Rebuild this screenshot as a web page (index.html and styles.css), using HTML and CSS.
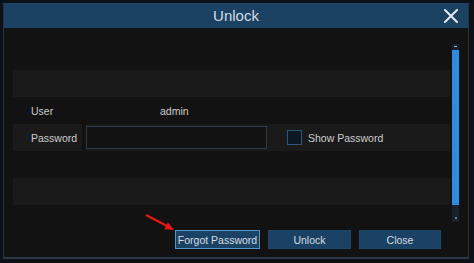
FILE: index.html
```html
<!DOCTYPE html>
<html>
<head>
<meta charset="utf-8">
<link rel="stylesheet" href="styles.css">
</head>
<body>
<div class="dialog">
  <div class="titlebar">
    <span></span>
    <span class="title">Unlock</span>
    <svg class="close" width="14" height="14" viewBox="0 0 14 14"><path d="M1 1 L13 13 M13 1 L1 13" stroke="#e3e8ec" stroke-width="2" stroke-linecap="square"/></svg>
  </div>
  <div class="content">
    <div class="main">
      <div class="row"></div>
      <div class="row light"></div>
      <div class="row">
        <span class="label wide">User</span>
        <span class="value">admin</span>
      </div>
      <div class="row light">
        <span class="label cell">Password</span>
        <span class="gap"></span>
        <span class="input"></span>
        <span class="check"></span>
        <span class="label">Show Password</span>
      </div>
      <div class="row"></div>
      <div class="row light"></div>
      <div class="footer">
        <button class="btn selected">Forgot Password</button>
        <button class="btn">Unlock</button>
        <button class="btn">Close</button>
      </div>
    </div>
    <div class="scroll">
      <div class="tick"></div>
      <div class="thumb"></div>
      <div class="dot"></div>
    </div>
  </div>
  <svg class="arrow" width="40" height="26" viewBox="0 0 40 26"><line x1="6" y1="5" x2="27" y2="16" stroke="#e01818" stroke-width="2.5"/><polygon points="34,20 24.2,19.3 28,12.3" fill="#e01818"/></svg>
</div>
</body>
</html>
```

FILE: styles.css
```css
html, body {
  margin: 0;
  padding: 0;
  background: #0c1117;
}
body {
  padding: 3px 0 0 3px;
  font-family: "Liberation Sans", Arial, sans-serif;
}
.dialog {
  position: relative;
  width: 466px;
  height: 256px;
  box-sizing: border-box;
  background: #121212;
  border-left: 1px solid #25313b;
  border-right: 1px solid #25313b;
  border-bottom: 2px solid #2a3845;
  display: flex;
  flex-direction: column;
}
.titlebar {
  height: 25px;
  background: #1b4263;
  display: grid;
  grid-template-columns: 1fr auto 1fr;
  align-items: center;
}
.title {
  color: #d3dbe3;
  font-size: 15px;
  padding-bottom: 1px;
}
.close {
  justify-self: end;
  margin-right: 10px;
  margin-top: 1px;
}
.content {
  flex: 1;
  display: flex;
  padding: 15px 0 0 9px;
}
.main {
  width: 437px;
  display: flex;
  flex-direction: column;
}
.row {
  height: 27px;
  display: flex;
  align-items: center;
  font-size: 10.5px;
  color: #cdcdcd;
}
.row.light {
  background: #1a1a1a;
}
.label {
  white-space: nowrap;
}
.wide {
  width: 129px;
  padding-left: 18px;
}
.cell {
  width: 51px;
  padding-left: 18px;
  height: 100%;
  display: flex;
  align-items: center;
}
.gap {
  width: 4px;
  height: 100%;
  background: #121212;
}
.input {
  width: 181px;
  height: 23px;
  box-sizing: border-box;
  border: 1px solid #2b3c4d;
  background: #121212;
}
.check {
  width: 15px;
  height: 15px;
  box-sizing: border-box;
  border: 1px solid #2d5479;
  background: #0e1824;
  margin-left: 20px;
  margin-right: 6px;
}
.footer {
  display: flex;
  justify-content: flex-end;
  gap: 8px;
  padding: 25px 9px 0 0;
}
.btn {
  height: 19px;
  padding: 0;
  margin: 0;
  box-sizing: border-box;
  background: #1a4264;
  border: 1px solid #1d4769;
  color: #d8dde2;
  font-family: "Liberation Sans", Arial, sans-serif;
  font-size: 10.5px;
  width: 83px;
}
.btn.selected {
  width: 85px;
  border-color: #5496cc;
}
.btn:last-child {
  width: 82px;
}
.scroll {
  width: 7px;
  margin-left: 2px;
  margin-top: 1px;
  height: 178px;
  background: #17222d;
  display: flex;
  flex-direction: column;
  align-items: center;
}
.tick {
  width: 3px;
  height: 1px;
  background: #8fb8e0;
  margin-top: 2px;
}
.thumb {
  width: 7px;
  height: 155px;
  margin-top: 3px;
  background: #2f8ae2;
}
.dot {
  width: 2px;
  height: 2px;
  background: #6a7a8a;
  margin-top: 12px;
}
.arrow {
  position: absolute;
  left: 136px;
  top: 207px;
}
```
